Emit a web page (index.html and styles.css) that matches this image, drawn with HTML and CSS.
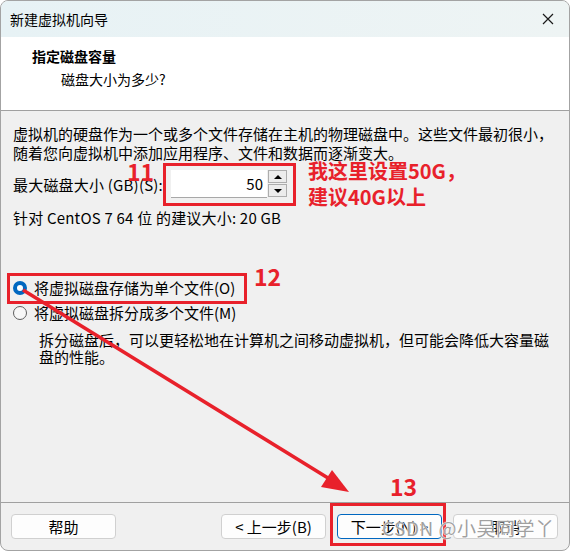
FILE: index.html
```html
<!DOCTYPE html>
<html lang="zh-CN">
<head>
    <meta charset="UTF-8">
    <title>新建虚拟机向导</title>
    <link rel="stylesheet" href="styles.css">
</head>
<body>
    <div class="window">
        <div class="titlebar">
            <span class="title">新建虚拟机向导</span>
            <svg class="close" width="12" height="12" viewBox="0 0 12 12">
                <path d="M1 1 L11 11 M11 1 L1 11" stroke="#1a1a1a" stroke-width="1.2" fill="none"/>
            </svg>
        </div>

        <div class="header">
            <div class="header-title">指定磁盘容量</div>
            <div class="header-sub">磁盘大小为多少?</div>
        </div>

        <div class="content">
            <p class="para">虚拟机的硬盘作为一个或多个文件存储在主机的物理磁盘中。这些文件最初很小，<br>随着您向虚拟机中添加应用程序、文件和数据而逐渐变大。</p>

            <div class="size-row">
                <span class="label">最大磁盘大小 (GB)(S):</span>
                <div class="spin">
                    <div class="spin-input">50</div>
                    <div class="spin-btns">
                        <div class="spin-btn"><span class="tri-up"></span></div>
                        <div class="spin-btn"><span class="tri-down"></span></div>
                    </div>
                </div>
            </div>

            <p class="recommend">针对 CentOS 7 64 位 的建议大小: 20 GB</p>

            <div class="options">
                <label class="option">
                    <span class="radio checked"></span>
                    <span>将虚拟磁盘存储为单个文件(O)</span>
                </label>
                <label class="option">
                    <span class="radio"></span>
                    <span>将虚拟磁盘拆分成多个文件(M)</span>
                </label>
                <p class="desc">拆分磁盘后，可以更轻松地在计算机之间移动虚拟机，但可能会降低大容量磁<br>盘的性能。</p>
            </div>
        </div>

        <div class="footer">
            <button class="btn">帮助</button>
            <div class="spacer"></div>
            <button class="btn">&lt; 上一步(B)</button>
            <button class="btn primary">下一步(N) &gt;</button>
            <button class="btn">取消</button>
        </div>

        <!-- annotations drawn over the dialog -->
        <div class="mark box-spin"></div>
        <div class="mark box-radio"></div>
        <div class="mark box-next"></div>
        <span class="num num-11">11</span>
        <span class="num num-12">12</span>
        <span class="num num-13">13</span>
        <div class="note">我这里设置50G，<br>建议40G以上</div>
        <svg class="arrow" width="570" height="551" viewBox="0 0 570 551">
            <line x1="23" y1="290" x2="328" y2="478" stroke="#e8212b" stroke-width="3.5"/>
            <polygon points="349,492 321,487 332,470" fill="#e8212b"/>
        </svg>
        <div class="watermark">CSDN @小吴同学丫</div>
    </div>
</body>
</html>
```

FILE: styles.css
```css
body {
    margin: 0;
    font-family: "Noto Sans CJK SC", "Noto Sans", sans-serif;
    font-size: 15px;
    color: #000;
}
.window {
    position: relative;
    box-sizing: border-box;
    width: 570px;
    height: 551px;
    border: 1px solid #a3a3a3;
    border-radius: 8px;
    overflow: hidden;
    display: flex;
    flex-direction: column;
    background: #f0f0f0;
}
.titlebar {
    height: 36px;
    flex: none;
    display: flex;
    align-items: center;
    justify-content: space-between;
    padding: 0 15px 0 9px;
    background: linear-gradient(to right, #e7f2f5, #eef4f4);
}
.title {
    font-size: 14px;
}
.header {
    flex: none;
    box-sizing: border-box;
    background: #fff;
    border-bottom: 1px solid #a0a0a0;
    height: 74px;
    padding: 9px 0 0 31px;
}
.header-title {
    font-size: 14px;
    font-weight: bold;
    line-height: 20px;
}
.header-sub {
    font-size: 14px;
    line-height: 20px;
    margin: 3px 0 0 29px;
}
.content {
    flex: 1;
    padding: 13px 12px 0 12px;
}
.para {
    margin: 0;
    line-height: 19px;
    white-space: nowrap;
}
.size-row {
    display: flex;
    align-items: center;
    margin-top: 8px;
    height: 29px;
}
.label {
    width: 158px;
    letter-spacing: 0.2px;
}
.spin {
    display: flex;
    height: 29px;
}
.spin-input {
    width: 96px;
    height: 28px;
    box-sizing: border-box;
    background: #fff;
    border-bottom: 1px solid #a8a8a8;
    text-align: right;
    padding-right: 4px;
    line-height: 27px;
    font-size: 15px;
}
.spin-btns {
    display: flex;
    flex-direction: column;
    gap: 1px;
    margin-left: 1px;
}
.spin-btn {
    width: 19px;
    height: 13px;
    box-sizing: border-box;
    border: 1px solid #adadad;
    background: #ececec;
    display: flex;
    align-items: center;
    justify-content: center;
}
.tri-up {
    border-left: 4px solid transparent;
    border-right: 4px solid transparent;
    border-bottom: 4px solid #000;
}
.tri-down {
    border-left: 4px solid transparent;
    border-right: 4px solid transparent;
    border-top: 4px solid #000;
}
.recommend {
    margin: 9px 0 0 0;
    line-height: 20px;
    letter-spacing: 0.2px;
}
.options {
    margin-top: 47px;
}
.option {
    display: flex;
    align-items: center;
    gap: 7px;
    height: 25px;
}
.radio {
    width: 14px;
    height: 14px;
    box-sizing: border-box;
    border-radius: 50%;
    border: 1px solid #5e5e5e;
    background: #f7f7f7;
}
.radio.checked {
    border: 4px solid #0067c0;
    background: #fff;
}
.desc {
    margin: 6px 0 0 26px;
    line-height: 17px;
    white-space: nowrap;
}
.footer {
    flex: none;
    height: 48px;
    box-sizing: border-box;
    border-top: 1px solid #a0a0a0;
    display: flex;
    align-items: flex-start;
    gap: 11px;
    padding: 11px 11px 0 10px;
}
.spacer {
    flex: 1;
}
.btn {
    width: 105px;
    height: 25px;
    font-family: inherit;
    font-size: 15px;
    color: #000;
    background: #fdfdfd;
    border: 1px solid #d0d0d0;
    border-radius: 4px;
    padding: 0;
    line-height: 22px;
}
.btn.primary {
    border-color: #0067c0;
}

/* annotations */
.mark {
    position: absolute;
    border: 3px solid #e8212b;
}
.box-spin {
    left: 162px;
    top: 162px;
    width: 127px;
    height: 37px;
}
.box-radio {
    left: 6px;
    top: 272px;
    width: 234px;
    height: 25px;
}
.box-next {
    left: 329px;
    top: 502px;
    width: 110px;
    height: 37px;
}
.num {
    position: absolute;
    color: #e8212b;
    font-weight: bold;
    font-size: 23px;
    line-height: 1;
}
.num-11 {
    left: 126px;
    top: 159px;
}
.num-12 {
    left: 253px;
    top: 264px;
}
.num-13 {
    left: 389px;
    top: 474px;
}
.note {
    position: absolute;
    left: 307px;
    top: 157px;
    color: #e8212b;
    font-weight: bold;
    font-size: 20px;
    line-height: 26px;
}
.arrow {
    position: absolute;
    left: -1px;
    top: -1px;
    pointer-events: none;
}
.watermark {
    position: absolute;
    left: 381px;
    top: 513px;
    font-size: 19px;
    letter-spacing: 0.5px;
    color: rgba(95, 95, 95, 0.6);
    text-shadow: 0 0 1px #fff, 0 0 1px #fff, 0 0 2px #fff;
    white-space: nowrap;
}
```
